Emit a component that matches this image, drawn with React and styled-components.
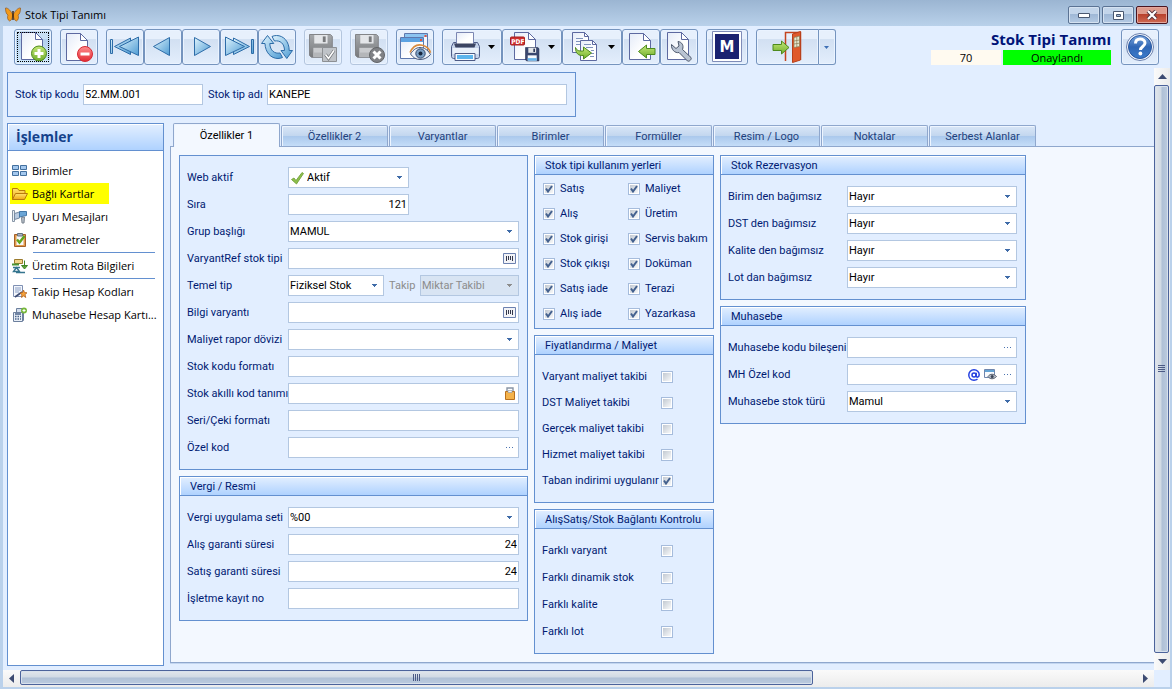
import React, { useId, useState } from 'react';
import styled, { createGlobalStyle, css } from 'styled-components';

const GlobalStyle = createGlobalStyle`
  * {
    box-sizing: border-box;
  }

  body {
    margin: 0;
    background: #bad1eb;
    font-family: Roboto, 'Noto Sans', sans-serif;
    font-size: 11px;
    color: #000;
  }

  button, input, select {
    font: inherit;
    margin: 0;
    padding: 0;
    border-radius: 0;
  }
`;

const formFont = `Roboto, 'Noto Sans', sans-serif`;
const uiFont = `'Open Sans', 'Noto Sans', sans-serif`;

/* window */

const WindowStyled = styled.div`
  display: flex;
  flex-direction: column;
  min-height: 100vh;
  background: #bad1eb;
`;

const TitleBar = styled.header`
  display: flex;
  align-items: center;
  height: 26px;
  padding: 4px 4px 0 5px;
  background: linear-gradient(#9bb5d2, #b9d1ea);
`;

const WindowTitle = styled.h1`
  flex: 1;
  margin: 0 0 0 4px;
  font: 11px/18px ${uiFont};
`;

const WindowButtons = styled.div`
  display: flex;
  gap: 2px;
`;

const WindowButton = styled.button`
  display: flex;
  align-items: center;
  justify-content: center;
  width: 32px;
  height: 18px;
  border: 1px solid ${(p) => (p.$close ? '#4a1520' : '#5b7394')};
  border-radius: 2px;
  box-shadow: inset 0 0 0 1px ${(p) => (p.$close ? '#e4a79c' : '#d5e2f1')};
  background: ${(p) =>
    p.$close
      ? 'linear-gradient(#dd9b8d 0 45%, #b8412d 46%, #cf6a54)'
      : 'linear-gradient(#c3d5ea 0 45%, #9fb8d6 46%, #b4cae4)'};
`;

const Frame = styled.div`
  flex: 1;
  display: flex;
  flex-direction: column;
  margin: 0 2px 3px 3px;
  background: #e2eeff;
`;

/* toolbar */

const ToolbarStyled = styled.div`
  display: flex;
  gap: 8px;
  height: 42px;
  padding: 3px 11px 0;
`;

const ButtonGroup = styled.div`
  display: flex;
`;

const ToolButtonStyled = styled.button`
  position: relative;
  width: ${(p) => p.$width || 38}px;
  height: 36px;
  border: 1px solid #7594be;
  border-radius: 3px;
  background: linear-gradient(#e7f0fc 0 27%, #d2e0f2 28%, #e3eefc);
  box-shadow: inset 0 0 0 1px #eaf3ff;

  svg {
    display: block;
  }

  ${(p) =>
    p.$active &&
    css`
      background: linear-gradient(#c9dff3 0 27%, #b3d0ee 28%, #cfe8fb);
    `}

  &:disabled {
    border-color: #b4c6de;
  }
`;

const FocusMark = styled.span`
  position: absolute;
  inset: 2px;
  border: 1px dotted #000;
`;

const SplitButton = styled(ToolButtonStyled)`
  border-radius: ${(p) => (p.$left ? '3px 0 0 3px' : '0 3px 3px 0')};
  border-left-width: ${(p) => (p.$left ? 1 : 0)}px;
`;

const RecordStatus = styled.div`
  margin-left: auto;
  margin-right: 2px;
  text-align: right;
`;

const RecordTitle = styled.h2`
  margin: 0;
  font: bold 15px/21px ${uiFont};
  color: #001378;
`;

const StatusLine = styled.div`
  display: flex;
  justify-content: flex-end;
  gap: 2px;
`;

const StatusCell = styled.span`
  width: ${(p) => p.$width}px;
  height: 15px;
  font: 11px/15px ${uiFont};
  text-align: center;
  background: ${(p) => p.$color};
`;

/* body */

const Body = styled.div`
  flex: 1;
  display: grid;
  grid-template-columns: minmax(0, 1fr) 16px;
  grid-template-rows: 1fr 17px;
`;

const Content = styled.div`
  display: flex;
  flex-direction: column;
  gap: 6px;
  padding: 4px 0 0 4px;
`;

const KeyPanel = styled.form`
  align-self: flex-start;
  display: flex;
  align-items: center;
  height: 45px;
  padding: 0 8px 0 7px;
  border: 1px solid #6390d0;
  gap: 5px;
`;

const Main = styled.div`
  flex: 1;
  display: flex;
  gap: 6px;
`;

/* sidebar */

const SidebarStyled = styled.nav`
  width: 157px;
  flex-shrink: 0;
  margin-bottom: 4px;
  border: 1px solid #6390d0;
  background: #fff;
`;

const SidebarTitle = styled.h2`
  margin: 0;
  padding-left: 8px;
  border-bottom: 1px solid #6390d0;
  box-shadow: inset 1px 1px 0 #fff;
  background: linear-gradient(#e3efff, #afd2ff);
  font: bold 14px/26px ${uiFont};
  color: #15428b;
`;

const SidebarList = styled.ul`
  list-style: none;
  margin: 0;
  padding: 8px 2px;
`;

const SidebarItem = styled.li`
  display: flex;
  align-items: center;
  height: 23px;
`;

const SidebarDivider = styled.li`
  height: 1px;
  margin: 1px 6px 1px 23px;
  background: #6390d0;
`;

const SidebarLink = styled.a`
  display: flex;
  align-items: center;
  gap: 4px;
  height: 21px;
  padding: 0 2px;
  padding-right: ${(p) => (p.$marked ? 15 : 0)}px;
  background: ${(p) => (p.$marked ? '#ffff00' : 'transparent')};
  color: #000;
  font: 11px/20px ${uiFont};
  text-decoration: none;
  white-space: nowrap;
`;

/* tabs */

const TabArea = styled.div`
  flex: 1;
  min-width: 0;
  display: flex;
  flex-direction: column;
  margin-bottom: 7px;
`;

const TabList = styled.div`
  display: flex;
  align-items: flex-end;
  gap: 1px;
  height: 24px;
  padding-left: 3px;
  border-bottom: 1px solid #8fa7cd;
`;

const TabButton = styled.button`
  width: 107px;
  height: 21px;
  border: 1px solid #8fa7cd;
  border-bottom: 0;
  border-radius: 2px 2px 0 0;
  background: linear-gradient(#d9e6f7 0, #c3d7ef 48%, #aac8ec 50%, #c5ddf8);
  box-shadow: inset 1px 1px 0 #eef5ff;
  color: #1e3f7c;

  ${(p) =>
    p.$active &&
    css`
      height: 24px;
      margin-bottom: -1px;
      background: #f3f8ff;
      color: #000;
    `}
`;

const TabPanel = styled.div`
  flex: 1;
  display: flex;
  align-items: flex-start;
  gap: 6px;
  padding: 8px;
  border: 1px solid #8fa7cd;
  border-top: 0;
  border-right: 0;
  box-shadow: 0 1px 0 #c3d6f0;
  background: #f3f8ff;
`;

const Column = styled.div`
  display: flex;
  flex-direction: column;
  flex: 0 0 ${(p) => p.$width}px;
  gap: 6px;
`;

/* groups and fields */

const GroupStyled = styled.section`
  border: 1px solid #6390d0;
  background: #e2eeff;
`;

const GroupTitle = styled.h3`
  margin: 0;
  padding-left: 10px;
  height: 19px;
  border-bottom: 1px solid #6390d0;
  box-shadow: inset 1px 1px 0 #fff;
  background: linear-gradient(#e3efff, #afd2ff);
  font: 11px/19px ${formFont};
  color: #001a72;
`;

const Rows = styled.div`
  display: flex;
  flex-direction: column;
  gap: ${(p) => p.$gap || 6}px;
  padding: 11px 8px 11px 7px;
`;

const Row = styled.div`
  display: flex;
  align-items: center;
  height: 21px;
`;

const Label = styled.label`
  flex: 0 0 ${(p) => (p.$width ? `${p.$width}px` : 'auto')};
  min-width: 0;
  color: ${(p) => (p.$muted ? '#8c8c8c' : '#001a72')};
  line-height: 19px;
  white-space: nowrap;
`;

const FieldBox = styled.div`
  position: relative;
  flex: ${(p) => (p.$width ? `0 0 ${p.$width}px` : 1)};
  min-width: 0;
  display: flex;
  align-items: center;
  height: 21px;
  border: 1px solid #b3c7e1;
  background: ${(p) => (p.$muted ? '#d8e4f3' : '#fff')};
`;

const TextInput = styled.input`
  flex: 1;
  width: 100%;
  min-width: 0;
  height: 19px;
  padding: 0 1px;
  border: 0;
  outline: 0;
  background: transparent;
  color: #000;
  text-align: ${(p) => (p.$right ? 'right' : 'left')};
`;

const SelectInput = styled.select`
  appearance: none;
  flex: 1;
  width: 100%;
  height: 19px;
  padding: 0 16px 0 ${(p) => (p.$icon ? 18 : 1)}px;
  border: 0;
  outline: 0;
  background: transparent;
  color: #000;

  &:disabled {
    color: #8c8c8c;
    opacity: 1;
  }
`;

const Caret = styled.svg`
  position: absolute;
  right: 6px;
  top: 8px;
  pointer-events: none;
`;

const FieldIcon = styled.span`
  position: absolute;
  left: 1px;
  top: 2px;
  pointer-events: none;

  svg {
    display: block;
  }
`;

const FieldButton = styled.button`
  flex: 0 0 17px;
  display: flex;
  align-items: center;
  justify-content: center;
  height: 19px;
  border: 0;
  background: transparent;
  color: #1c3fd6;
`;

const Gap = styled.span`
  flex: 0 0 5px;
`;

const CheckGrid = styled.div`
  display: grid;
  grid-template-columns: 85px 1fr;
  grid-auto-flow: column;
  grid-template-rows: repeat(6, 21px);
  row-gap: 4px;
  padding: 3px 0 4px 8px;
`;

const CheckItem = styled.div`
  display: flex;
  align-items: center;
  gap: 5px;
`;

const CheckBoxStyled = styled.span`
  position: relative;
  display: block;
  width: 12px;
  height: 12px;

  input {
    appearance: none;
    display: block;
    width: 12px;
    height: 12px;
    border: 1px solid #a6bcdc;
    background: linear-gradient(135deg, #c2c9d2, #f8f9fa) content-box, #fff;
    padding: 1px;
  }

  svg {
    position: absolute;
    left: 2px;
    top: 2px;
    pointer-events: none;
  }
`;

/* scrollbars */

const ScrollBar = styled.div`
  display: flex;
  flex-direction: ${(p) => (p.$vertical ? 'column' : 'row')};
  background: ${(p) =>
    p.$vertical
      ? 'linear-gradient(90deg, #fafafa, #ececec)'
      : 'linear-gradient(#fafafa, #ececec)'};
`;

const ScrollArrow = styled.button`
  display: flex;
  align-items: center;
  justify-content: center;
  flex: 0 0 17px;
  border: 0;
  background: transparent;
`;

const ScrollTrack = styled.div`
  flex: 1;
  display: flex;
  flex-direction: ${(p) => (p.$vertical ? 'column' : 'row')};
`;

const ScrollThumb = styled.div`
  flex: 0 0 ${(p) => p.$size};
  display: flex;
  align-items: center;
  justify-content: center;
  margin: ${(p) => (p.$vertical ? '0 1px 0 0' : '0 0 2px')};
  border: 1px solid #4c639b;
  border-radius: 2px;
  box-shadow: inset 0 0 0 1px #d8e1ec;
  background: ${(p) => css`
    linear-gradient(${p.$vertical ? '90deg' : '180deg'}, #e2e6eb 0, #d0d9e4 48%, #afc0d6 52%, #bccbdf)
  `};
`;

/* drawings */

const Defs = () => (
  <svg width="0" height="0" style={{ position: 'absolute' }} aria-hidden="true">
    <defs>
      <linearGradient id="paper" x1="0" y1="0" x2="1" y2="1">
        <stop offset="0" stopColor="#e4ebf8" />
        <stop offset=".6" stopColor="#fff" />
      </linearGradient>
      <linearGradient id="blue" x1="0" y1="0" x2="1" y2="1">
        <stop offset="0" stopColor="#e0f4fd" />
        <stop offset="1" stopColor="#4d9bd3" />
      </linearGradient>
      <linearGradient id="green" x1="0" y1="0" x2="0" y2="1">
        <stop offset="0" stopColor="#c5e878" />
        <stop offset="1" stopColor="#6fae2c" />
      </linearGradient>
      <linearGradient id="red" x1="0" y1="0" x2="0" y2="1">
        <stop offset="0" stopColor="#ff8d8d" />
        <stop offset="1" stopColor="#e22a32" />
      </linearGradient>
      <linearGradient id="gray" x1="0" y1="0" x2="0" y2="1">
        <stop offset="0" stopColor="#a5a8ab" />
        <stop offset="1" stopColor="#77797c" />
      </linearGradient>
      <linearGradient id="help" x1="0" y1="0" x2="0" y2="1">
        <stop offset="0" stopColor="#7ba6dd" />
        <stop offset=".5" stopColor="#2f66b5" />
        <stop offset="1" stopColor="#3c7ccb" />
      </linearGradient>
      <linearGradient id="folder" x1="0" y1="0" x2="0" y2="1">
        <stop offset="0" stopColor="#ffe36e" />
        <stop offset="1" stopColor="#f0a914" />
      </linearGradient>
    </defs>
  </svg>
);

// the drawing covers the button without its 1px border
const ToolIcon = ({ width = 38, children }) => (
  <svg width={width - 2} height="34" viewBox={`1 1 ${width - 2} 34`} fill="none" aria-hidden="true">
    {children}
  </svg>
);

const Page = ({ x, y, w, h, fold = 7 }) => (
  <g stroke="#5d69a0" fill="url(#paper)">
    <path d={`M${x} ${y}h${w - fold}l${fold} ${fold}v${h - fold}h${-w}z`} />
    <path d={`M${x + w - fold} ${y}v${fold}h${fold}z`} fill="#fff" />
  </g>
);

const Floppy = ({ x, y, s = 1, dark }) => (
  <g transform={`translate(${x} ${y}) scale(${s})`}>
    <path d="M0 0h22l2 2v22H2l-2-2z" fill={dark ? '#39476f' : 'url(#gray)'} stroke={dark ? '#202a4c' : '#7f8184'} />
    <path d="M5 .5h14v9H5z" fill="#e4e6e9" />
    <path d="M14 2h3v6h-3z" fill={dark ? '#2b3759' : '#77797c'} />
    <path d="M4 14h16v9.500H4z" fill={dark ? '#f6f9fd' : '#c9cbce'} />
    <path d="M4 19h16v4.500H4z" fill={dark ? '#64b4ec' : '#b4b6b9'} />
  </g>
);

const BlackCaret = () => <path d="M46 16h7l-3.500 4z" fill="#000" />;

const icons = {
  add: (
    <ToolIcon>
      <Page x={7.5} y={3.5} w={21} h={27} />
      <circle cx="25" cy="24.500" r="7.500" fill="url(#green)" stroke="#4d8a1d" />
      <path d="M25 20v9M20.500 24.500h9" stroke="#fff" strokeWidth="3" />
    </ToolIcon>
  ),
  remove: (
    <ToolIcon>
      <Page x={6.5} y={4.5} w={21} h={27} />
      <circle cx="25" cy="25" r="7.500" fill="url(#red)" stroke="#d62a34" />
      <path d="M20.500 25h9" stroke="#fff" strokeWidth="3" />
    </ToolIcon>
  ),
  first: (
    <ToolIcon>
      <g fill="url(#blue)" stroke="#2d6ca8">
        <path d="M4.500 10.500h2v14h-2zM8.500 17.500L24.500 9v16.500z" />
        <path d="M13.500 17.500L32.500 8v18.500z" />
      </g>
    </ToolIcon>
  ),
  prev: (
    <ToolIcon>
      <path d="M9.500 17.500L25.500 8.500v18z" fill="url(#blue)" stroke="#2d6ca8" />
    </ToolIcon>
  ),
  next: (
    <ToolIcon>
      <path d="M28.500 17.500L12.500 8.500v18z" fill="url(#blue)" stroke="#2d6ca8" />
    </ToolIcon>
  ),
  last: (
    <ToolIcon>
      <g fill="url(#blue)" stroke="#2d6ca8">
        <path d="M31.500 10.500h2v14h-2zM29.500 17.500L13.500 9v16.500z" />
        <path d="M24.500 17.500L5.500 8v18.500z" />
      </g>
    </ToolIcon>
  ),
  refresh: (
    <ToolIcon>
      <g fill="url(#blue)" stroke="#2d6ca8" strokeLinejoin="round">
        <path d="M9.500 6.500L3.500 14.500h3.500c.3 9 6 15 13 15 1.600 0 3.200-.4 4.500-1l-2.500-4.500c-5.500 1-10-2.500-10.200-9.500h4z" />
        <path d="M28.800 29.500L34.500 21.500h-3.300c0-9-5.700-15-12.700-15-1.600 0-3.200.4-4.500 1l2.500 4.500c5.500-1 10 2.500 10 9.500h-3.500z" />
      </g>
    </ToolIcon>
  ),
  saveOk: (
    <ToolIcon>
      <Floppy x={5.5} y={5.5} s={0.95} />
      <path d="M18.500 18.500h14v14h-14z" fill="#bfc3c8" stroke="#8d9094" />
      <path d="M21.500 25.500l3 4 5.500-8" stroke="#6e7175" strokeWidth="3" />
      <path d="M21.500 25.500l3 4 5.500-8" stroke="#fff" strokeWidth="1.600" />
    </ToolIcon>
  ),
  saveCancel: (
    <ToolIcon>
      <Floppy x={5.5} y={5.5} s={0.95} />
      <circle cx="27" cy="26" r="7.500" fill="#808286" stroke="#636568" />
      <path d="M23.500 22.500l7 7M30.500 22.500l-7 7" stroke="#fff" strokeWidth="3" />
    </ToolIcon>
  ),
  preview: (
    <ToolIcon>
      <path d="M8.500 4.500h23v19h-23z" fill="#f4f8fe" stroke="#5d78ae" />
      <path d="M9 5h22v3H9z" fill="#8cc4f0" />
      <path d="M4.500 8.500h23v21h-23z" fill="url(#paper)" stroke="#5d78ae" />
      <path d="M5 9h22v4H5z" fill="#5da3e2" />
      <path d="M28.500 6h2v2h-2zM24 10h2v2h-2z" fill="#e4523c" />
      <path d="M14.500 25c3-5 7-7 11-6.500 4 .5 7 3.500 9 7-3 3.500-6.500 5-10.500 5-4 0-7-2-9.500-5.500z" fill="#eef3fa" stroke="#46597c" />
      <circle cx="24.500" cy="24.500" r="4.700" fill="#7ba0c4" stroke="#33496e" />
      <circle cx="24.500" cy="24.500" r="2" fill="#17263f" />
      <path d="M14 23.500c3-6.500 8-8.500 12.500-7.200 4 1 7 4 8 7.500" stroke="#d88b3e" strokeWidth="1.600" />
    </ToolIcon>
  ),
  print: (
    <ToolIcon width={60}>
      <path d="M11.500 13.500h24l2 4v10c0 1-1 2-2 2h-24c-1 0-2-1-2-2v-10z" fill="#c4d2ea" stroke="#4d5b86" />
      <path d="M10.500 19h26v6h-26z" fill="#e9f0fa" />
      <path d="M14.500 3.500h17v12h-17z" fill="url(#paper)" stroke="#7c87b3" />
      <path d="M12 14.500h22l-1.500 4h-19z" fill="#3c4562" />
      <path d="M13 24.500h20v7H13z" fill="#f7fafe" stroke="#4d5b86" />
      <path d="M15 26h16v4H15z" fill="#5cb4ec" />
      <BlackCaret />
    </ToolIcon>
  ),
  pdf: (
    <ToolIcon width={60}>
      <Page x={12.500} y={3.500} w={21} h={27} />
      <rect x="8.500" y="8" width="14" height="8" rx="1" fill="#cf2f2f" stroke="#a51d1d" />
      <text x="9.300" y="14.500" fontFamily="DejaVu Sans Condensed, sans-serif" fontWeight="bold" fontSize="6.500" fill="#fff">PDF</text>
      <Floppy x={23.500} y={18.500} s={0.56} dark />
      <BlackCaret />
    </ToolIcon>
  ),
  copy: (
    <ToolIcon width={60}>
      <Page x={10.500} y={3.500} w={16} h={20} fold={4} />
      <path d="M14 9.500h7M14 12.500h9M14 15.500h9" stroke="#7f93bd" />
      <Page x={18.500} y={11.500} w={16} h={20} fold={4} />
      <path d="M22 15.500h7M24 18.500h7M29 21.500h3M29 24.500h3M28 27.500h4" stroke="#7f93bd" />
      <path d="M13.500 18.500c1 3 3.500 4 8 3.500V18l8 6-8 6v-3.500c-5 .5-8-2-8-8z" fill="url(#green)" stroke="#4d8a1d" />
      <BlackCaret />
    </ToolIcon>
  ),
  importDoc: (
    <ToolIcon>
      <Page x={7.500} y={4.500} w={21} h={26} />
      <path d="M16.500 22.500l8-6.500v3.500h8.500v6h-8.500V29z" fill="url(#green)" stroke="#4d8a1d" />
    </ToolIcon>
  ),
  settings: (
    <ToolIcon>
      <Page x={7.500} y={3.500} w={21} h={27} />
      <path d="M11.500 15.500l4.500 4 3-2.500-1-4.500c4 .5 6 4 4.500 8l8.500 8c1 1.500-1.500 4.500-3.500 3.500l-8.500-8.500c-4 1-8-3-7.500-8z" fill="#b9c3d2" stroke="#4c576c" />
    </ToolIcon>
  ),
  brand: (
    <ToolIcon width={42}>
      <path d="M6.500 2.500h29v30h-29z" fill="#fff" stroke="#7f8cb8" />
      <path d="M9 5h24v25H9z" fill="#1b2270" />
      <text x="21" y="23" textAnchor="middle" fontFamily="DejaVu Sans, sans-serif" fontWeight="bold" fontSize="15" fill="#fff">M</text>
    </ToolIcon>
  ),
  exit: (
    <ToolIcon width={63}>
      <path d="M29.500 32V3.500h15V31" stroke="#c4441f" strokeWidth="1.500" />
      <path d="M36.500 5l8-2.500v28.500l-8 2.500z" fill="#df5a2c" stroke="#b8401b" />
      <path d="M38 8.500l5.500-1.500v10.500l-5.500 1z" fill="#e6ead2" stroke="#8a7a52" strokeWidth=".7" />
      <path d="M40.800 8v10M38 12l5.500-1M38 15l5.500-.8" stroke="#8a7a52" strokeWidth=".7" />
      <path d="M33 18.500l-7.500-6.500v3.500h-8.500v6h8.500V25z" fill="url(#green)" stroke="#4d8a1d" />
    </ToolIcon>
  ),
  exitMenu: (
    <ToolIcon width={17}>
      <path d="M6 17h5l-2.500 3z" fill="#3f6fb5" />
    </ToolIcon>
  ),
  help: (
    <ToolIcon>
      <circle cx="19" cy="18" r="13.500" fill="#f3f7fd" stroke="#6c81ad" />
      <circle cx="19" cy="18" r="11.500" fill="url(#help)" stroke="#27569f" />
      <path d="M14.500 14.500c0-3 2-4.500 4.700-4.500s4.800 1.500 4.800 4c0 3.500-4.500 3.500-4.500 7" stroke="#fff" strokeWidth="3" />
      <circle cx="19.400" cy="24.500" r="1.900" fill="#fff" />
    </ToolIcon>
  ),
};

const SmallIcon = ({ children, size = 16 }) => (
  <svg width={size} height={size} viewBox="0 0 16 16" fill="none" aria-hidden="true">
    {children}
  </svg>
);

const Butterfly = () => (
  <SmallIcon>
    <path d="M7.500 7C5 2.500 2 .5.500 1c0 3 .5 6 2.500 7-1 2-.5 5 1.500 6 2-.5 3-3 3-5z" fill="#f29a1c" stroke="#8a4c10" strokeWidth=".6" />
    <path d="M8.500 7c2.500-4.500 5.500-6.500 7-6 0 3-.5 6-2.500 7 1 2 .5 5-1.500 6-2-.5-3-3-3-5z" fill="#f29a1c" stroke="#8a4c10" strokeWidth=".6" />
    <path d="M8 4v9" stroke="#3b2108" strokeWidth="1.400" />
  </SmallIcon>
);

const sideIcons = {
  units: (
    <SmallIcon>
      <g fill="#a4c8ee" stroke="#43709f">
        <path d="M.5 2.500h6v4h-6zM8.500 2.500h6v4h-6zM.5 8.500h6v4h-6zM8.500 8.500h6v4h-6z" />
      </g>
    </SmallIcon>
  ),
  folder: (
    <SmallIcon>
      <path d="M.5 13.500v-11h5l1.500 2h6v3" fill="url(#folder)" stroke="#b87a0b" />
      <path d="M.5 13.500l3-6h12l-3 6z" fill="url(#folder)" stroke="#b87a0b" />
    </SmallIcon>
  ),
  horn: (
    <SmallIcon>
      <path d="M.5 1.500h2v11h-2z" fill="#eaf0f6" stroke="#8795a6" />
      <path d="M2.500 4.500l5-1.500v6l-5 1.500z" fill="#b9cbe0" stroke="#7689a1" />
      <path d="M7.500 2.500h7v4l-7 1.500z" fill="#6aa5d6" stroke="#4478a8" />
      <path d="M9.500 8.500l3-.5-.5 6h-2z" fill="#b7bfc9" stroke="#7b8590" />
    </SmallIcon>
  ),
  clipboard: (
    <SmallIcon>
      <path d="M2.500 2.500h11v12h-11z" fill="#e39a4b" stroke="#a2602a" />
      <path d="M4.500 4h7v9h-7z" fill="#f6f8fb" />
      <path d="M5.500 1.500h5v2.500h-5z" fill="#a8b3c2" stroke="#66727f" />
      <path d="M5 7.500l2.500 3L12.500 4" stroke="#5fa51e" strokeWidth="2.400" />
    </SmallIcon>
  ),
  route: (
    <SmallIcon>
      <path d="M2.500 1.500h8v4h-8z" fill="#f1d489" stroke="#9b7b2d" />
      <path d="M0 6.500h7" stroke="#4a9434" strokeWidth="2" />
      <path d="M12.500 2.500v6M9.500 7.500h6l-3 3.500z" fill="#62a83c" stroke="#3f8526" />
      <path d="M1 9.500h7M4.500 9.500l-3 4h6zM4 14.500h9" stroke="#35758f" strokeWidth="1.400" />
    </SmallIcon>
  ),
  pen: (
    <SmallIcon>
      <path d="M1.500 1.500h9v11h-9z" fill="#f3f6fc" stroke="#7f90b3" />
      <path d="M3 4h6M3 6h6M3 8h4" stroke="#8a9fc4" />
      <path d="M3 13l7-5" stroke="#3e4d73" strokeWidth="1.600" />
      <path d="M11.500 6l1 2.500 2.500.3-2 1.700.8 3-2.300-1.500-2 1.500.4-2.800-1.900-1.700 2.500-.4z" fill="#f4a13a" stroke="#b4621c" strokeWidth=".8" />
    </SmallIcon>
  ),
  ledger: (
    <SmallIcon>
      <path d="M4.500 1.500h7v12h-7z" fill="#d4deec" stroke="#6c7f9d" />
      <path d="M1.500 5.500h9v9h-9z" fill="#e9eff7" stroke="#6c7f9d" />
      <path d="M3 7h6M3 9.500h1.500M5.500 9.500H7M8 9.500h1M3 12h1.500M5.500 12H7M8 12h1" stroke="#4a638b" strokeWidth="1.400" />
      <circle cx="12" cy="3.500" r="3" fill="#76b73a" />
      <path d="M12 2v3M10.500 3.500h3" stroke="#fff" />
    </SmallIcon>
  ),
};

const BarcodeIcon = () => (
  <svg width="13" height="11" viewBox="0 0 13 11" fill="none" aria-hidden="true">
    <path d="M.5.500h12v10H.500z" fill="#f2f3f7" stroke="#6d82b0" />
    <path d="M3.500 3v5M5.500 3v4M7.500 3v4M9.500 3v5" stroke="#33374a" />
  </svg>
);

const LockIcon = () => (
  <svg width="10" height="13" viewBox="0 0 10 13" fill="none" aria-hidden="true">
    <path d="M2 6V1h6v5" stroke="#8894a5" strokeWidth="1.400" />
    <path d="M.5 4.500h9v8h-9z" fill="#f4b24a" stroke="#b9701d" />
    <path d="M3 3.500h4v2H3z" fill="#f5f5f5" stroke="#8894a5" strokeWidth=".6" />
  </svg>
);

const DotsIcon = () => (
  <svg width="7" height="1" viewBox="0 0 7 1" fill="#4a73b0" aria-hidden="true">
    <path d="M0 0h1v1H0zM3 0h1v1H3zM6 0h1v1H6z" />
  </svg>
);

const AtIcon = () => (
  <svg width="12" height="12" viewBox="0 0 12 12" fill="none" stroke="#2440e0" strokeWidth="1.500" aria-hidden="true">
    <circle cx="6" cy="6" r="2" />
    <path d="M8.200 3.800v3.200c0 1.800 3 1.500 3-1.200C11.200 3 9 .8 6 .8S.8 3 .8 6 3 11.200 6 11.200c1.500 0 2.500-.3 3.500-1" />
  </svg>
);

const ViewIcon = () => (
  <svg width="13" height="11" viewBox="0 0 13 11" fill="none" aria-hidden="true">
    <path d="M.5.500h10v8H.500z" fill="#f8fafd" stroke="#6f86ad" />
    <path d="M1 1h9v2H1z" fill="#63a3d4" />
    <path d="M4 7.500c2-3 6-3 8.500 0-2.500 3-6.500 3-8.500 0z" fill="#b8c0cc" stroke="#59616e" />
    <circle cx="8.200" cy="7.500" r="1.500" fill="#3d4657" />
  </svg>
);

const TickIcon = () => (
  <SmallIcon>
    <path d="M1.500 9.500l2.500-1.500 2 2.500L12 2.500l1.500 1L6.500 14z" fill="#8dbf4c" stroke="#6d9c35" strokeWidth=".8" />
  </SmallIcon>
);

const CaretMark = ({ muted }) => (
  <Caret width="5" height="3" viewBox="0 0 5 3" fill={muted ? '#8c8c8c' : '#3f6ba8'} aria-hidden="true">
    <path d="M0 0h5v1H4v1H3v1H2V2H1V1H0z" />
  </Caret>
);

/* controls */

const fieldIcons = {
  barcode: <BarcodeIcon />,
  lock: <LockIcon />,
  dots: <DotsIcon />,
  at: <AtIcon />,
  view: <ViewIcon />,
};

function TextField({ id, value = '', width, right, buttons = [] }) {
  const [text, setText] = useState(value);

  return (
    <FieldBox $width={width}>
      <TextInput id={id} type="text" value={text} $right={right} onChange={(e) => setText(e.target.value)} />
      {buttons.map((name) => (
        <FieldButton key={name} type="button" aria-label={name}>
          {fieldIcons[name]}
        </FieldButton>
      ))}
    </FieldBox>
  );
}

function SelectField({ id, value = '', width, icon, disabled }) {
  return (
    <FieldBox $width={width} $muted={disabled}>
      {icon && <FieldIcon>{icon}</FieldIcon>}
      <SelectInput id={id} defaultValue={value} disabled={disabled} $icon={!!icon}>
        <option>{value}</option>
      </SelectInput>
      <CaretMark muted={disabled} />
    </FieldBox>
  );
}

function CheckBox({ id, defaultChecked = false }) {
  const [checked, setChecked] = useState(defaultChecked);

  return (
    <CheckBoxStyled>
      <input id={id} type="checkbox" checked={checked} onChange={(e) => setChecked(e.target.checked)} />
      {checked && (
        <svg width="8" height="8" viewBox="0 0 8 8" fill="none" aria-hidden="true">
          <path d="M1 3.500l2 3L7 1" stroke="#44618f" strokeWidth="2" />
        </svg>
      )}
    </CheckBoxStyled>
  );
}

function FormRow({ label, labelWidth, as: Field, ...rest }) {
  const id = useId();

  return (
    <Row>
      <Label htmlFor={id} $width={labelWidth}>{label}</Label>
      <Field id={id} {...rest} />
    </Row>
  );
}

function Group({ title, children }) {
  return (
    <GroupStyled>
      {title && <GroupTitle>{title}</GroupTitle>}
      {children}
    </GroupStyled>
  );
}

function ToolButton({ icon, label, width, ...rest }) {
  return (
    <ToolButtonStyled type="button" aria-label={label} $width={width} {...rest}>
      {icons[icon]}
      {rest.$active && <FocusMark />}
    </ToolButtonStyled>
  );
}

/* data */

const tabs = ['Özellikler 1', 'Özellikler 2', 'Varyantlar', 'Birimler', 'Formüller', 'Resim / Logo', 'Noktalar', 'Serbest Alanlar'];

const menu = [
  { text: 'Birimler', icon: 'units' },
  { text: 'Bağlı Kartlar', icon: 'folder', marked: true },
  { text: 'Uyarı Mesajları', icon: 'horn' },
  { text: 'Parametreler', icon: 'clipboard' },
  { divider: true },
  { text: 'Üretim Rota Bilgileri', icon: 'route' },
  { divider: true },
  { text: 'Takip Hesap Kodları', icon: 'pen' },
  { text: 'Muhasebe Hesap Kartı...', icon: 'ledger' },
];

const usages = [
  'Satış', 'Alış', 'Stok girişi', 'Stok çıkışı', 'Satış iade', 'Alış iade',
  'Maliyet', 'Üretim', 'Servis bakım', 'Doküman', 'Terazi', 'Yazarkasa',
];

const costs = ['Varyant maliyet takibi', 'DST Maliyet takibi', 'Gerçek maliyet takibi', 'Hizmet maliyet takibi', 'Taban indirimi uygulanır'];

const controls = ['Farklı varyant', 'Farklı dinamik stok', 'Farklı kalite', 'Farklı lot'];

const reservations = ['Birim den bağımsız', 'DST den bağımsız', 'Kalite den bağımsız', 'Lot dan bağımsız'];

function Toolbar() {
  return (
    <ToolbarStyled>
      <ToolButton icon="add" label="Yeni" $active />
      <ToolButton icon="remove" label="Sil" />
      <ButtonGroup>
        <ToolButton icon="first" label="İlk" />
        <ToolButton icon="prev" label="Önceki" />
        <ToolButton icon="next" label="Sonraki" />
        <ToolButton icon="last" label="Son" />
        <ToolButton icon="refresh" label="Yenile" />
      </ButtonGroup>
      <ToolButton icon="saveOk" label="Kaydet" disabled />
      <ToolButton icon="saveCancel" label="Vazgeç" disabled />
      <ToolButton icon="preview" label="Önizleme" />
      <ButtonGroup>
        <ToolButton icon="print" label="Yazdır" width={60} />
        <ToolButton icon="pdf" label="PDF" width={60} />
        <ToolButton icon="copy" label="Kopyala" width={60} />
        <ToolButton icon="importDoc" label="Al" />
        <ToolButton icon="settings" label="Ayarlar" />
      </ButtonGroup>
      <ToolButton icon="brand" label="M" width={42} />
      <ButtonGroup>
        <SplitButton type="button" aria-label="Çıkış" $width={63} $left>{icons.exit}</SplitButton>
        <SplitButton type="button" aria-label="Çıkış seçenekleri" $width={17}>{icons.exitMenu}</SplitButton>
      </ButtonGroup>
      <RecordStatus>
        <RecordTitle>Stok Tipi Tanımı</RecordTitle>
        <StatusLine>
          <StatusCell $width={70} $color="#fffaf0">70</StatusCell>
          <StatusCell $width={108} $color="#00ff00">Onaylandı</StatusCell>
        </StatusLine>
      </RecordStatus>
      <ToolButton icon="help" label="Yardım" />
    </ToolbarStyled>
  );
}

function Sidebar() {
  return (
    <SidebarStyled>
      <SidebarTitle>İşlemler</SidebarTitle>
      <SidebarList>
        {menu.map((item, i) =>
          item.divider ? (
            <SidebarDivider key={i} />
          ) : (
            <SidebarItem key={item.text}>
              <SidebarLink href="#" $marked={item.marked}>
                {sideIcons[item.icon]}
                {item.text}
              </SidebarLink>
            </SidebarItem>
          )
        )}
      </SidebarList>
    </SidebarStyled>
  );
}

function Properties() {
  const tracking = useId();
  const baseType = useId();
  const usageId = useId();

  return (
    <TabPanel role="tabpanel">
      <Column $width={349}>
        <Group>
          <Rows>
            <FormRow as={SelectField} label="Web aktif" labelWidth={101} value="Aktif" width={121} icon={<TickIcon />} />
            <FormRow as={TextField} label="Sıra" labelWidth={101} value="121" width={121} right />
            <FormRow as={SelectField} label="Grup başlığı" labelWidth={101} value="MAMUL" />
            <FormRow as={TextField} label="VaryantRef stok tipi" labelWidth={101} buttons={['barcode']} />
            <Row>
              <Label htmlFor={baseType} $width={101}>Temel tip</Label>
              <SelectField id={baseType} value="Fiziksel Stok" width={96} />
              <Gap />
              <Label htmlFor={tracking} $width={31} $muted>Takip</Label>
              <SelectField id={tracking} value="Miktar Takibi" disabled />
            </Row>
            <FormRow as={TextField} label="Bilgi varyantı" labelWidth={101} buttons={['barcode']} />
            <FormRow as={SelectField} label="Maliyet rapor dövizi" labelWidth={101} />
            <FormRow as={TextField} label="Stok kodu formatı" labelWidth={101} />
            <FormRow as={TextField} label="Stok akıllı kod tanımı" labelWidth={101} buttons={['lock']} />
            <FormRow as={TextField} label="Seri/Çeki formatı" labelWidth={101} />
            <FormRow as={TextField} label="Özel kod" labelWidth={101} buttons={['dots']} />
          </Rows>
        </Group>
        <Group title="Vergi / Resmi">
          <Rows>
            <FormRow as={SelectField} label="Vergi uygulama seti" labelWidth={101} value="%00" />
            <FormRow as={TextField} label="Alış garanti süresi" labelWidth={101} value="24" right />
            <FormRow as={TextField} label="Satış garanti süresi" labelWidth={101} value="24" right />
            <FormRow as={TextField} label="İşletme kayıt no" labelWidth={101} />
          </Rows>
        </Group>
      </Column>

      <Column $width={180}>
        <Group title="Stok tipi kullanım yerleri">
          <CheckGrid>
            {usages.map((text, i) => (
              <CheckItem key={text}>
                <CheckBox id={`${usageId}${i}`} defaultChecked />
                <Label htmlFor={`${usageId}${i}`}>{text}</Label>
              </CheckItem>
            ))}
          </CheckGrid>
        </Group>
        <Group title="Fiyatlandırma / Maliyet">
          <Rows $gap={5}>
            {costs.map((text, i) => (
              <FormRow as={CheckBox} key={text} label={text} labelWidth={119} defaultChecked={i === 4} />
            ))}
          </Rows>
        </Group>
        <Group title="AlışSatış/Stok Bağlantı Kontrolu">
          <Rows>
            {controls.map((text) => (
              <FormRow as={CheckBox} key={text} label={text} labelWidth={119} />
            ))}
          </Rows>
        </Group>
      </Column>

      <Column $width={306}>
        <Group title="Stok Rezervasyon">
          <Rows>
            {reservations.map((text) => (
              <FormRow as={SelectField} key={text} label={text} labelWidth={119} value="Hayır" />
            ))}
          </Rows>
        </Group>
        <Group title="Muhasebe">
          <Rows>
            <FormRow as={TextField} label="Muhasebe kodu bileşeni" labelWidth={119} buttons={['dots']} />
            <FormRow as={TextField} label="MH Özel kod" labelWidth={119} buttons={['at', 'view', 'dots']} />
            <FormRow as={SelectField} label="Muhasebe stok türü" labelWidth={119} value="Mamul" />
          </Rows>
        </Group>
      </Column>
    </TabPanel>
  );
}

export default function App() {
  const [activeTab, setActiveTab] = useState(0);

  return (
    <WindowStyled lang="tr">
      <GlobalStyle />
      <Defs />
      <TitleBar>
        <Butterfly />
        <WindowTitle>Stok Tipi Tanımı</WindowTitle>
        <WindowButtons>
          <WindowButton type="button" aria-label="Küçült">
            <svg width="12" height="6" viewBox="0 0 12 6"><path d="M.5 1.500h11v4H.500z" fill="#fff" stroke="#4a5870" /></svg>
          </WindowButton>
          <WindowButton type="button" aria-label="Büyüt">
            <svg width="11" height="9" viewBox="0 0 11 9"><path d="M.5.500h10v8H.500zM3.500 3.500h4v2h-4z" fill="#fff" fillRule="evenodd" stroke="#4a5870" /></svg>
          </WindowButton>
          <WindowButton type="button" aria-label="Kapat" $close>
            <svg width="12" height="10" viewBox="0 0 12 10" fill="none">
              <path d="M2 1l8 8M10 1L2 9" stroke="#54303a" strokeWidth="4" />
              <path d="M2 1l8 8M10 1L2 9" stroke="#fff" strokeWidth="2.200" />
            </svg>
          </WindowButton>
        </WindowButtons>
      </TitleBar>

      <Frame>
        <Toolbar />
        <Body>
          <Content>
            <KeyPanel>
              <Label htmlFor="code" $width={63}>Stok tip kodu</Label>
              <TextField id="code" value="52.MM.001" width={120} />
              <Label htmlFor="name" $width={54}>Stok tip adı</Label>
              <TextField id="name" value="KANEPE" width={300} />
            </KeyPanel>
            <Main>
              <Sidebar />
              <TabArea>
                <TabList role="tablist">
                  {tabs.map((text, i) => (
                    <TabButton key={text} type="button" role="tab" $active={i === activeTab} onClick={() => setActiveTab(i)}>
                      {text}
                    </TabButton>
                  ))}
                </TabList>
                <Properties />
              </TabArea>
            </Main>
          </Content>

          <ScrollBar $vertical>
            <ScrollArrow type="button" aria-label="Yukarı">
              <svg width="9" height="5" viewBox="0 0 9 5" fill="#3d4b72"><path d="M0 5L4.500 0 9 5z" /></svg>
            </ScrollArrow>
            <ScrollTrack $vertical>
              <ScrollThumb $vertical $size="100%">
                <svg width="7" height="8" viewBox="0 0 7 8" stroke="#4c5a85"><path d="M0 .5h7M0 2.500h7M0 4.500h7M0 6.500h7" /></svg>
              </ScrollThumb>
            </ScrollTrack>
            <ScrollArrow type="button" aria-label="Aşağı">
              <svg width="9" height="5" viewBox="0 0 9 5" fill="#3d4b72"><path d="M0 0l4.500 5L9 0z" /></svg>
            </ScrollArrow>
          </ScrollBar>

          <ScrollBar>
            <ScrollArrow type="button" aria-label="Sola">
              <svg width="5" height="9" viewBox="0 0 5 9" fill="#3d4b72"><path d="M5 0L0 4.500 5 9z" /></svg>
            </ScrollArrow>
            <ScrollTrack>
              <ScrollThumb $size="71%">
                <svg width="8" height="7" viewBox="0 0 8 7" stroke="#4c5a85"><path d="M.5 0v7M2.500 0v7M4.500 0v7M6.500 0v7" /></svg>
              </ScrollThumb>
            </ScrollTrack>
            <ScrollArrow type="button" aria-label="Sağa">
              <svg width="5" height="9" viewBox="0 0 5 9" fill="#3d4b72"><path d="M0 0l5 4.500L0 9z" /></svg>
            </ScrollArrow>
          </ScrollBar>
        </Body>
      </Frame>
    </WindowStyled>
  );
}
